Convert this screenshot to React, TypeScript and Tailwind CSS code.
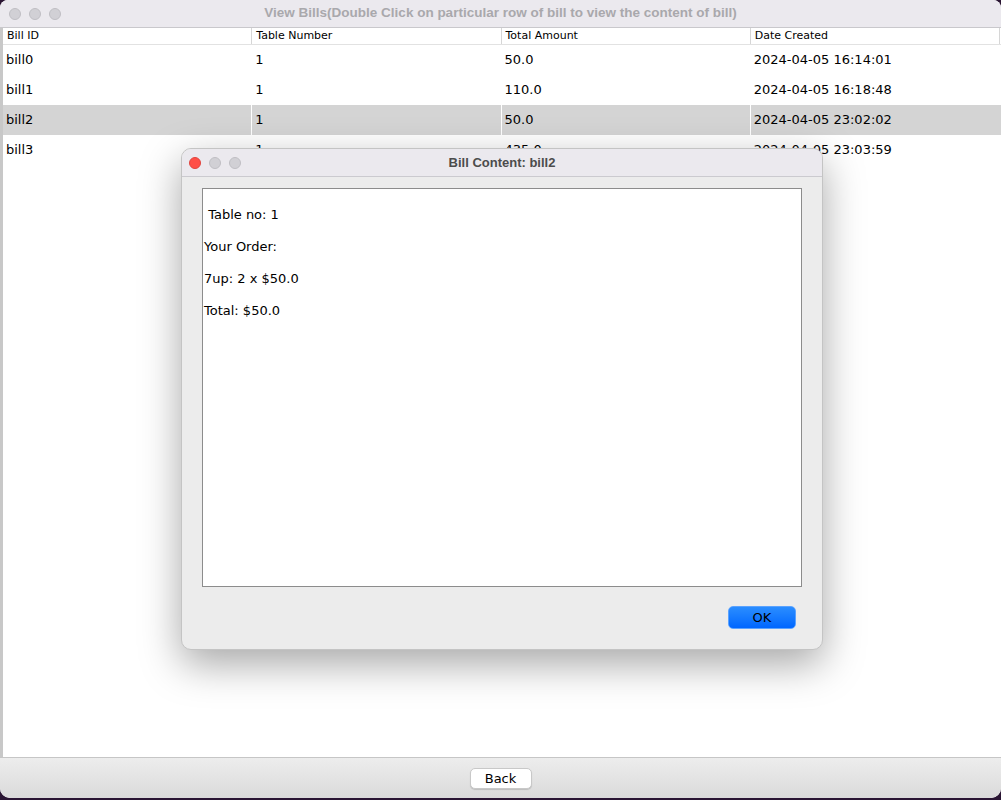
import React from "react";

const font = { fontFamily: '"DejaVu Sans", "Liberation Sans", sans-serif' };
const titleFont = { fontFamily: '"Liberation Sans", Arial, sans-serif' };

const rows = [
  ["bill0", "1", "50.0", "2024-04-05 16:14:01"],
  ["bill1", "1", "110.0", "2024-04-05 16:18:48"],
  ["bill2", "1", "50.0", "2024-04-05 23:02:02"],
  ["bill3", "1", "435.0", "2024-04-05 23:03:59"],
];

function Lights({ active }: { active?: boolean }) {
  return (
    <div className="flex items-center gap-[8px]">
      <span
        className={
          "block w-[12px] h-[12px] rounded-full border " +
          (active ? "bg-[#ff4f47] border-[#e0443e]" : "bg-[#d1d0d5] border-[#bfbec3]")
        }
      />
      <span className="block w-[12px] h-[12px] rounded-full bg-[#d1d0d5] border border-[#bfbec3]" />
      <span className="block w-[12px] h-[12px] rounded-full bg-[#d1d0d5] border border-[#bfbec3]" />
    </div>
  );
}

export default function App() {
  return (
    <div className="w-[1001px] h-[800px] bg-[#2a1533] relative overflow-hidden" style={font}>
      <div className="w-[1001px] h-[798px] bg-white rounded-b-[10px] rounded-t-[8px] overflow-hidden flex flex-col">
        {/* title bar */}
        <div className="h-[28px] shrink-0 bg-[#ebe9ee] border-b border-[#c9c8cc] flex items-center relative">
          <div className="pl-[9px]">
            <Lights />
          </div>
          <div
            className="absolute inset-0 flex items-center justify-center text-[13.5px] font-bold text-[#a9a8ac]"
            style={titleFont}
          >
            View Bills(Double Click on particular row of bill to view the content of bill)
          </div>
        </div>
        {/* content */}
        <div className="flex-1 flex">
          <div className="w-[3px] bg-[#c8c8c8] shrink-0" />
          <div className="flex-1 flex flex-col">
            <div className="h-[17px] flex border-b border-[#e2e2e2] text-[11px] text-black">
              {["Bill ID", "Table Number", "Total Amount", "Date Created"].map((h, i) => (
                <div
                  key={h}
                  className={
                    "flex-1 flex items-center pl-[4px] " + (i > 0 ? "border-l border-[#d6d6d6]" : "")
                  }
                >
                  {h}
                </div>
              ))}
              <div className="w-[2px] border-l border-[#d6d6d6]" />
            </div>
            {rows.map((r, ri) => (
              <div
                key={r[0]}
                className={"h-[30px] flex text-[13px] text-black " + (ri === 2 ? "bg-[#d4d4d4]" : "bg-white")}
              >
                {r.map((c, ci) => (
                  <div
                    key={ci}
                    className={
                      "flex-1 flex items-center pl-[3px] " +
                      (ci > 0 ? (ri === 2 ? "border-l border-white" : "border-l border-transparent") : "")
                    }
                  >
                    {c}
                  </div>
                ))}
                <div className="w-[2px]" />
              </div>
            ))}
          </div>
        </div>
        {/* bottom bar */}
        <div className="h-[41px] shrink-0 border-t border-[#c6c6c6] bg-gradient-to-b from-[#ededed] to-[#dadada] flex items-center justify-center">
          <button className="w-[62px] h-[21px] rounded-[5px] bg-white border border-[#c8c8c8] shadow-[0_1px_1px_rgba(0,0,0,0.15)] text-[13px] text-black">
            Back
          </button>
        </div>
      </div>

      {/* dialog */}
      <div className="absolute left-[181px] top-[148px] w-[642px] h-[502px] rounded-[10px] bg-[#ececec] border border-[#c4c4c4] shadow-[0_14px_40px_rgba(0,0,0,0.35)] overflow-hidden flex flex-col">
        <div className="h-[28px] shrink-0 bg-[#ebe9ee] border-b border-[#cbcacf] flex items-center relative">
          <div className="pl-[7px]">
            <Lights active />
          </div>
          <div
            className="absolute inset-0 flex items-center justify-center text-[13px] font-bold text-[#4c4c4c]"
            style={titleFont}
          >
            Bill Content: bill2
          </div>
        </div>
        <div className="flex-1 flex flex-col px-[20px] pt-[11px]">
          <div className="h-[399px] bg-white border border-[#8c8c8c] text-[13px] text-black pl-[1px] pt-[17px] flex flex-col gap-[14px] leading-[18px]">
            <div>&nbsp;Table no: 1</div>
            <div>Your Order:</div>
            <div>7up: 2 x $50.0</div>
            <div>Total: $50.0</div>
          </div>
          <div className="flex justify-end pr-[6px] pt-[19px]">
            <button className="w-[68px] h-[23px] rounded-[5px] bg-gradient-to-b from-[#2a8dff] to-[#0066ff] border border-[#5aa2ff] text-[13px] text-black">
              OK
            </button>
          </div>
        </div>
      </div>
    </div>
  );
}
